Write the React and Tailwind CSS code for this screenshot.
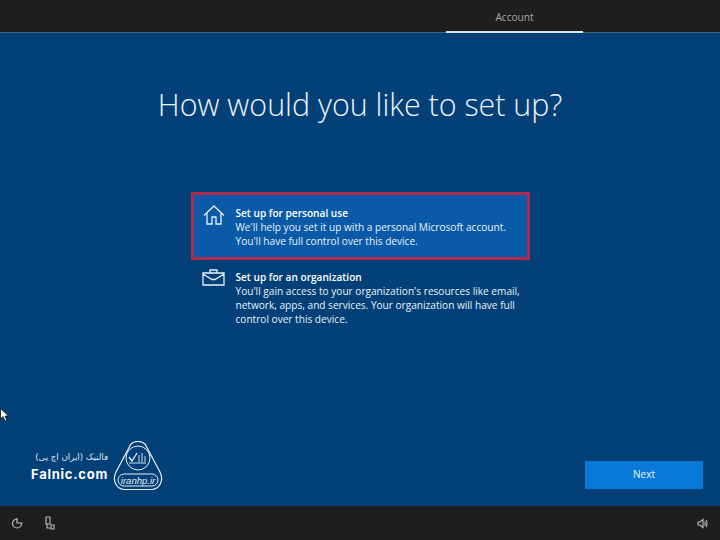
import React from 'react'

const Logo = () => (
  <svg width="52" height="50" viewBox="0 0 52 50" fill="none" stroke="#e6eef5" className="shrink-0">
    <path d="M19 3 C23 -0.5 29 -0.5 33 3 L48 31 C52 39 48 48 40 48.5 L12 48.5 C4 48 0 39 4 31 Z" strokeWidth="1.2" />
    <circle cx="26" cy="17" r="12" strokeWidth="1" />
    <path d="M17 16 l3 4 l5 -8" strokeWidth="1.3" />
    <path d="M27 21 v-7 M30 21 v-9 M33 21 v-6 M17 22 h17" strokeWidth="0.9" />
    <rect x="6" y="33" width="40" height="12" rx="6" strokeWidth="1" />
    <text x="26" y="42.5" textAnchor="middle" fill="#e6eef5" stroke="none" fontSize="9.5" fontStyle="italic" fontFamily="'Liberation Sans', sans-serif">iranhp.ir</text>
  </svg>
)

const Option = ({ icon, title, lines, selected }) => (
  <div className={selected
    ? 'flex w-[339px] h-[68px] border-[3px] border-[#b02a4c] bg-[#0a5aa8] pl-[9px] pt-[11px]'
    : 'flex w-[339px] pl-[12px] pt-[10px]'}>
    <div className="w-[33px] shrink-0">{icon}</div>
    <div className="text-[10.1px] leading-[14px] text-[#e8f0f7] whitespace-nowrap">
      <p className="font-semibold text-white">{title}</p>
      {lines.map((l) => <p key={l}>{l}</p>)}
    </div>
  </div>
)

const App = () => {
  return (
    <div className="relative w-[720px] h-[540px] flex flex-col overflow-hidden bg-[#034078] font-['Open_Sans',sans-serif]">

      <div className="h-[33px] shrink-0 bg-[#1e1e1e] border-b border-[#3f6685] flex justify-end pr-[137px]">
        <div className="w-[137px] h-[33px] border-b-2 border-[#d5e6f0] text-center text-[10.1px] leading-[34px] text-[#a8a8a8]">Account</div>
      </div>

      <div className="flex-1 flex flex-col items-center relative">
        <h1 className="mt-[50px] text-[30.4px] leading-[44px] font-light text-[#eef3f8]">How would you like to set up?</h1>

        <div className="mt-[65px] flex flex-col">
          <Option
            selected
            title="Set up for personal use"
            lines={["We'll help you set it up with a personal Microsoft account.", "You'll have full control over this device."]}
            icon={
              <svg width="22" height="20" viewBox="0 0 22 20" fill="none" stroke="#e8f0f7" strokeWidth="1.3" className="mt-[-1px]">
                <path d="M1 10.5 L11 1 L21 10.5 M4 8 V19 H9 V12 H13 V19 H18 V8" />
              </svg>
            }
          />
          <Option
            title="Set up for an organization"
            lines={["You'll gain access to your organization's resources like email,", "network, apps, and services. Your organization will have full", "control over this device."]}
            icon={
              <svg width="23" height="17" viewBox="0 0 23 17" fill="none" stroke="#e8f0f7" strokeWidth="1.3" className="ml-[-1px] mt-[-1px]">
                <path d="M1 4 H22 V16 H1 Z M8 4 V1 H15 V4 M1 5 L10 10.5 H13 L22 5" />
              </svg>
            }
          />
        </div>

        <div className="absolute left-[31px] top-[408px] flex items-center gap-[4px]">
          <div className="w-[77px] text-white">
            <p dir="rtl" className="text-[8.6px] leading-[14px] text-[#dfe8f0] whitespace-nowrap font-['DejaVu_Sans',sans-serif]">فالنیک (ایران اچ پی)</p>
            <p className="mt-[1px] text-[13px] leading-[18px] font-bold font-['Inter',sans-serif] tracking-[0.75px]">Falnic.com</p>
          </div>
          <Logo />
        </div>

        <button className="absolute left-[585px] top-[428px] w-[118px] h-[28px] bg-[#0a78d7] text-[10.1px] text-[#e8f4fc]">Next</button>
      </div>

      <div className="h-[34px] shrink-0 bg-[#1e1e1e] flex items-center pl-[11px] pr-[12px] text-[#bdbdbd]">
        <svg width="12" height="12" viewBox="0 0 12 12" fill="none" stroke="currentColor" strokeWidth="1.2">
          <path d="M6 2 A4.5 4.5 0 1 0 10.5 6.5 M6 1 L6 6 L11.5 6" />
        </svg>
        <svg width="11" height="14" viewBox="0 0 11 14" fill="none" stroke="currentColor" strokeWidth="1.1" className="ml-[21px]">
          <path d="M2 1 H6 V8 H2 Z M3 8 V12 H7 M7 9 H10 V13 H7 Z" />
        </svg>
        <svg width="11" height="11" viewBox="0 0 11 11" fill="none" stroke="currentColor" strokeWidth="1.1" className="ml-auto">
          <path d="M1 4 H3 L6 1.5 V9.5 L3 7 H1 Z M7.5 3.5 Q9 5.5 7.5 7.5 M9 2 Q11 5.5 9 9" />
        </svg>
      </div>

      <svg width="9" height="14" viewBox="0 0 9 14" className="absolute left-0 top-[408px]">
        <path d="M0.5 0.5 V11 L3 8.5 L5 13 L6.8 12.2 L5 8 H8.5 Z" fill="#fff" stroke="#000" strokeWidth="0.7" />
      </svg>
    </div>
  )
}

export default App
